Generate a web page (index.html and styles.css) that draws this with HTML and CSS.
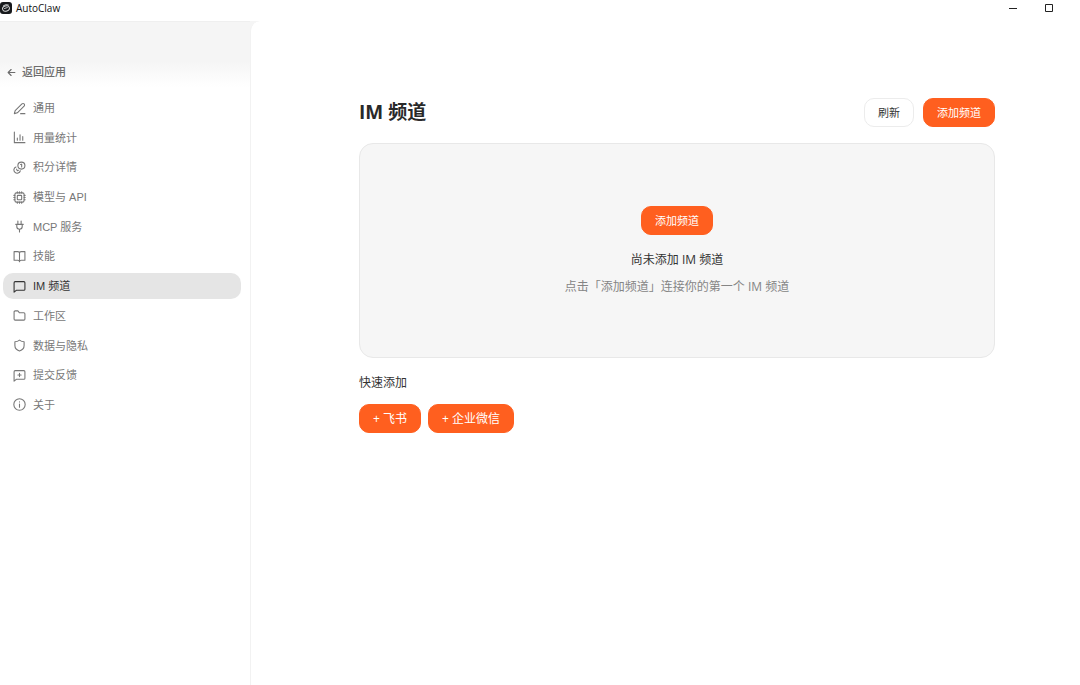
FILE: index.html
```html
<!DOCTYPE html>
<html lang="zh-CN">
<head>
<meta charset="utf-8">
<meta name="viewport" content="width=device-width, initial-scale=1">
<title>AutoClaw</title>
<link rel="stylesheet" href="styles.css">
</head>
<body>
<header class="titlebar">
  <svg class="logo" viewBox="0 0 12 12" aria-hidden="true"><rect width="12" height="12" rx="3" fill="#17191c"/><g fill="none" stroke="#d9dadb" stroke-linecap="round"><ellipse cx="6" cy="6.5" rx="3.5" ry="2.6" transform="rotate(-20 6 6.5)" stroke-width="1"/><path d="M3.4 3.7Q5.500 1.900 8.300 2.900M4.500 6.500L7.300 5.600" stroke-width=".9"/></g></svg>
  <span class="app-name">AutoClaw</span>
  <div class="window-controls">
    <button class="window-button" type="button" aria-label="最小化"><svg viewBox="0 0 10 10"><path d="M1 5.500h8"/></svg></button>
    <button class="window-button" type="button" aria-label="最大化"><svg viewBox="0 0 10 10"><path d="M1.500 1.500h7v7h-7z"/></svg></button>
  </div>
</header>
<div class="shell">
  <aside class="sidebar">
    <a class="back" href="#"><svg class="back-icon" viewBox="0 0 24 24"><path d="M21 12H3M11 4l-8 8 8 8"/></svg>返回应用</a>
    <nav class="nav" aria-label="设置">
      <a class="nav-item" href="#"><svg class="icon" viewBox="0 0 24 24"><path d="M16.500 3.500a2.500 2.500 0 0 1 4 4L8 20l-5.500 1.500L4 16z"/><path d="M14 21.500h8"/></svg>通用</a>
      <a class="nav-item" href="#"><svg class="icon" viewBox="0 0 24 24"><path d="M2.500 2v19.500H22M8 17v-4M13 17V7M18 17v-7"/></svg>用量统计</a>
      <a class="nav-item" href="#"><svg class="icon" viewBox="0 0 24 24"><circle cx="15.500" cy="8.500" r="6.500"/><path d="M14 6.500l2-.7v5.400"/><path d="M5.500 11A6 6 0 1 0 13.500 18"/><path d="M6.500 15l1.500 3 2-1"/></svg>积分详情</a>
      <a class="nav-item" href="#"><svg class="icon" viewBox="0 0 24 24"><rect x="3.500" y="3.500" width="17" height="17" rx="3"/><rect x="8" y="8" width="8" height="8" rx="1"/><path d="M8 1.500v2M12 1.500v2M16 1.500v2M8 20.500v2M12 20.500v2M16 20.500v2M1.500 8h2M1.500 12h2M1.500 16h2M20.500 8h2M20.500 12h2M20.500 16h2"/></svg>模型与 API</a>
      <a class="nav-item" href="#"><svg class="icon" viewBox="0 0 24 24"><path d="M9 2v6M15 2v6M5 8h14M7 8v4a5 5 0 0 0 10 0V8M12 17v5"/></svg>MCP 服务</a>
      <a class="nav-item" href="#"><svg class="icon" viewBox="0 0 24 24"><path d="M12 6v15.500M12 6a3 3 0 0 0-3-3H2v16h7a3 3 0 0 1 3 2.500 3 3 0 0 1 3-2.500h7V3h-7a3 3 0 0 0-3 3z"/></svg>技能</a>
      <a class="nav-item active" href="#" aria-current="page"><svg class="icon" viewBox="0 0 24 24"><path d="M4 3h16a2 2 0 0 1 2 2v12a2 2 0 0 1-2 2H6l-4 3.500V5a2 2 0 0 1 2-2z"/></svg>IM 频道</a>
      <a class="nav-item" href="#"><svg class="icon" viewBox="0 0 24 24"><path d="M4 3.500h5l3 3.500h8a2 2 0 0 1 2 2v9.500a2 2 0 0 1-2 2H4a2 2 0 0 1-2-2v-13a2 2 0 0 1 2-2z"/></svg>工作区</a>
      <a class="nav-item" href="#"><svg class="icon" viewBox="0 0 24 24"><path d="M12 2c2.500 2 5 3 8.500 3v7c0 5-3.500 8.500-8.500 10-5-1.500-8.500-5-8.500-10V5C7 5 9.500 4 12 2z"/></svg>数据与隐私</a>
      <a class="nav-item" href="#"><svg class="icon" viewBox="0 0 24 24"><path d="M4 3h16a2 2 0 0 1 2 2v12a2 2 0 0 1-2 2H6l-4 3.500V5a2 2 0 0 1 2-2zM12 8v6M9 11h6"/></svg>提交反馈</a>
      <a class="nav-item" href="#"><svg class="icon" viewBox="0 0 24 24"><circle cx="12" cy="12" r="10.500"/><path d="M12 11v6M12 7v.5"/></svg>关于</a>
    </nav>
  </aside>
  <main class="content">
    <div class="page-header">
      <h1 class="page-title">IM 频道</h1>
      <div class="actions">
        <button class="button secondary" type="button">刷新</button>
        <button class="button primary" type="button">添加频道</button>
      </div>
    </div>
    <section class="empty-card">
      <button class="button primary" type="button">添加频道</button>
      <p class="empty-title">尚未添加 IM 频道</p>
      <p class="empty-hint">点击「添加频道」连接你的第一个 IM 频道</p>
    </section>
    <section class="quick">
      <h2 class="quick-title">快速添加</h2>
      <div class="quick-list">
        <button class="button primary quick-button" type="button">+ 飞书</button>
        <button class="button primary quick-button" type="button">+ 企业微信</button>
      </div>
    </section>
  </main>
</div>
</body>
</html>
```
FILE: styles.css
```css
* {
  box-sizing: border-box;
}

body {
  display: flex;
  flex-direction: column;
  min-height: 100vh;
  margin: 0;
  background: #fff;
  color: #333;
  font-family: "Open Sans", "Noto Sans CJK SC", sans-serif;
  font-size: 12px;
  line-height: 18px;
}

button {
  font: inherit;
}

svg {
  flex: none;
  fill: none;
  stroke: currentColor;
  stroke-linecap: round;
  stroke-linejoin: round;
}

.titlebar {
  display: flex;
  align-items: center;
  height: 21px;
  padding: 0 26px 5px 0;
}

.logo {
  width: 12px;
  height: 12px;
  stroke: none;
}

.app-name {
  margin-left: 4px;
  color: #111;
  font-size: 10px;
}

.window-controls {
  display: flex;
  gap: 26px;
  margin-left: auto;
}

.window-button {
  display: flex;
  padding: 0;
  border: 0;
  background: none;
  color: #222;
}

.window-button svg {
  width: 10px;
  height: 10px;
  stroke-linecap: butt;
  stroke-linejoin: miter;
}

.shell {
  display: grid;
  flex: 1;
  grid-template-columns: 250px 1fr;
  background: linear-gradient(#f5f5f5 0, #f5f5f5 40px, #fff 66px);
}

.sidebar {
  padding: 41px 9px 20px 3px;
  border-top: 1px solid #efefef;
}

.back {
  display: flex;
  align-items: center;
  gap: 6px;
  padding-left: 4px;
  color: #6c6c6c;
  font-size: 11px;
  font-weight: 500;
  text-decoration: none;
}

.back-icon {
  width: 9px;
  height: 9px;
  stroke-width: 3;
}

.nav {
  display: flex;
  flex-direction: column;
  justify-content: space-between;
  min-height: 323px;
  margin-top: 14px;
}

.nav-item {
  display: flex;
  align-items: center;
  gap: 7px;
  height: 26px;
  padding-left: 10px;
  border-radius: 10px;
  color: #777;
  font-family: "Liberation Sans", "Noto Sans CJK SC", sans-serif;
  font-size: 11px;
  text-decoration: none;
}

.nav-item.active {
  background: #e5e5e5;
  color: #333;
}

.icon {
  width: 13px;
  height: 13px;
  stroke-width: 2;
}

.content {
  min-width: 0;
  padding: 77px 85px 40px 108px;
  border-left: 1px solid #f2f2f2;
  border-top-left-radius: 10px;
  background: #fff;
}

.page-header {
  display: flex;
  align-items: center;
  justify-content: space-between;
  gap: 16px;
}

.page-title {
  margin: 0;
  color: #292929;
  font-size: 19px;
  font-weight: 700;
  line-height: 29px;
}

.actions {
  display: flex;
  gap: 9px;
}

.button {
  height: 29px;
  padding: 0 13px;
  border: 1px solid transparent;
  border-radius: 10px;
  font-size: 11px;
  line-height: 16px;
}

.primary {
  border-color: #ff5f1f;
  background: #ff5f1f;
  color: #fff;
}

.secondary {
  border-color: #ececec;
  background: #fff;
  color: #333;
}

.empty-card {
  display: flex;
  flex-direction: column;
  align-items: center;
  margin-top: 16px;
  padding: 62px 20px 61px;
  border: 1px solid #e8e8e8;
  border-radius: 14px;
  background: #f6f6f6;
  text-align: center;
}

.empty-title {
  margin: 16px 0 0;
}

.empty-hint {
  margin: 9px 0 0;
  color: #858585;
}

.quick {
  margin-top: 16px;
}

.quick-title {
  margin: 0;
  font-size: 12px;
  font-weight: 400;
}

.quick-list {
  display: flex;
  flex-wrap: wrap;
  gap: 7px;
  margin-top: 12px;
}

.quick-button {
  font-size: 12px;
}
```
